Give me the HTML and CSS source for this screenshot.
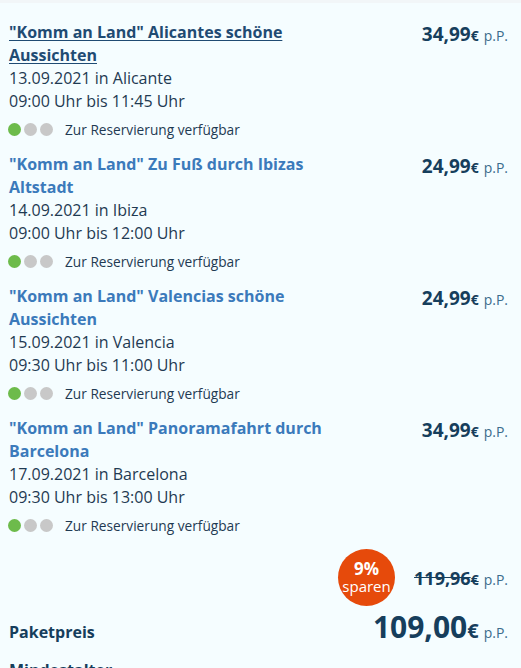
FILE: index.html
```html
<!DOCTYPE html>
<html lang="de">
<head>
<meta charset="utf-8">
<link rel="stylesheet" href="styles.css">
</head>
<body>
<div class="topbar"></div>
<div class="panel">
  <div class="item">
    <div class="info">
      <a class="title hover" href="#">"Komm an Land" Alicantes schöne Aussichten</a>
      <div class="line">13.09.2021 in Alicante</div>
      <div class="line">09:00 Uhr bis 11:45 Uhr</div>
      <div class="avail"><span class="dot green"></span><span class="dot"></span><span class="dot"></span><span class="avail-text">Zur Reservierung verfügbar</span></div>
    </div>
    <div class="price"><span class="amount">34,99</span><span class="cur">€</span><span class="pp">p.P.</span></div>
  </div>
  <div class="item">
    <div class="info">
      <a class="title" href="#">"Komm an Land" Zu Fuß durch Ibizas Altstadt</a>
      <div class="line">14.09.2021 in Ibiza</div>
      <div class="line">09:00 Uhr bis 12:00 Uhr</div>
      <div class="avail"><span class="dot green"></span><span class="dot"></span><span class="dot"></span><span class="avail-text">Zur Reservierung verfügbar</span></div>
    </div>
    <div class="price"><span class="amount">24,99</span><span class="cur">€</span><span class="pp">p.P.</span></div>
  </div>
  <div class="item">
    <div class="info">
      <a class="title" href="#">"Komm an Land" Valencias schöne Aussichten</a>
      <div class="line">15.09.2021 in Valencia</div>
      <div class="line">09:30 Uhr bis 11:00 Uhr</div>
      <div class="avail"><span class="dot green"></span><span class="dot"></span><span class="dot"></span><span class="avail-text">Zur Reservierung verfügbar</span></div>
    </div>
    <div class="price"><span class="amount">24,99</span><span class="cur">€</span><span class="pp">p.P.</span></div>
  </div>
  <div class="item">
    <div class="info">
      <a class="title" href="#">"Komm an Land" Panoramafahrt durch Barcelona</a>
      <div class="line">17.09.2021 in Barcelona</div>
      <div class="line">09:30 Uhr bis 13:00 Uhr</div>
      <div class="avail"><span class="dot green"></span><span class="dot"></span><span class="dot"></span><span class="avail-text">Zur Reservierung verfügbar</span></div>
    </div>
    <div class="price"><span class="amount">34,99</span><span class="cur">€</span><span class="pp">p.P.</span></div>
  </div>

  <div class="saving">
    <div class="badge"><span class="badge-pct">9%</span><span class="badge-txt">sparen</span></div>
    <div class="old"><span class="old-amount"><span class="amount">119,96</span><span class="cur">€</span></span><span class="pp">p.P.</span></div>
  </div>
  <div class="total">
    <div class="total-label">Paketpreis</div>
    <div class="total-price"><span class="big">109,00</span><span class="big-cur">€</span><span class="pp">p.P.</span></div>
  </div>
  <div class="min">Mindestalter</div>
</div>
</body>
</html>
```

FILE: styles.css
```css
html, body {
  margin: 0;
  padding: 0;
  background: #f5fdff;
}
body {
  font-family: "Open Sans", "Noto Sans", sans-serif;
  color: #1f3a52;
}
.topbar {
  height: 3px;
  background: #f2f6f8;
}
.panel {
  padding: 18px 13px 0 9px;
}
.item {
  display: flex;
  justify-content: space-between;
  align-items: flex-start;
  margin-bottom: 14px;
}
.info {
  width: 340px;
  display: flex;
  flex-direction: column;
}
.title {
  font-size: 16px;
  font-weight: 700;
  line-height: 23px;
  color: #3b7abb;
  text-decoration: none;
}
.title.hover {
  color: #1f4b73;
  text-decoration: underline;
  text-underline-offset: 2px;
}
.line {
  font-size: 16px;
  line-height: 23px;
  color: #1f3a52;
}
.avail {
  display: flex;
  align-items: center;
  height: 20px;
  margin-top: 6px;
}
.dot {
  width: 13px;
  height: 13px;
  border-radius: 50%;
  background: #c8c8c8;
  margin-right: 3px;
}
.dot.green {
  background: #6dbb4b;
}
.dot:first-child {
  margin-left: -1px;
}
.avail-text {
  margin-left: 9px;
  font-size: 13.7px;
  color: #1f3a52;
}
.price {
  display: flex;
  align-items: baseline;
  color: #163e5c;
  line-height: 23px;
  padding-top: 2px;
}
.amount {
  font-size: 19px;
  font-weight: 700;
}
.cur {
  font-size: 14px;
  font-weight: 700;
}
.pp {
  font-size: 14px;
  font-weight: 400;
  margin-left: 5px;
  color: #3b6c8c;
}
.saving {
  display: flex;
  justify-content: flex-end;
  align-items: center;
  margin-top: 7px;
}
.badge {
  width: 57px;
  height: 57px;
  border-radius: 50%;
  background: #e64a0b;
  color: #fff;
  display: flex;
  flex-direction: column;
  align-items: center;
  justify-content: center;
  margin-right: 19px;
}
.badge-pct {
  font-size: 17px;
  font-weight: 700;
  line-height: 17px;
}
.badge-txt {
  font-size: 15px;
  line-height: 18px;
}
.old {
  display: flex;
  align-items: baseline;
  color: #163e5c;
}
.old .amount {
  font-size: 18px;
}
.old-amount {
  text-decoration: line-through;
}
.total {
  display: flex;
  justify-content: space-between;
  align-items: baseline;
  margin-top: 0;
}
.total-label {
  font-size: 16px;
  font-weight: 700;
  color: #163e5c;
}
.total-price {
  display: flex;
  align-items: baseline;
  color: #163e5c;
}
.big {
  font-size: 30px;
  font-weight: 700;
}
.big-cur {
  font-size: 20px;
  font-weight: 700;
}
.min {
  margin-top: 12px;
  font-size: 16px;
  font-weight: 700;
  color: #163e5c;
}
```
